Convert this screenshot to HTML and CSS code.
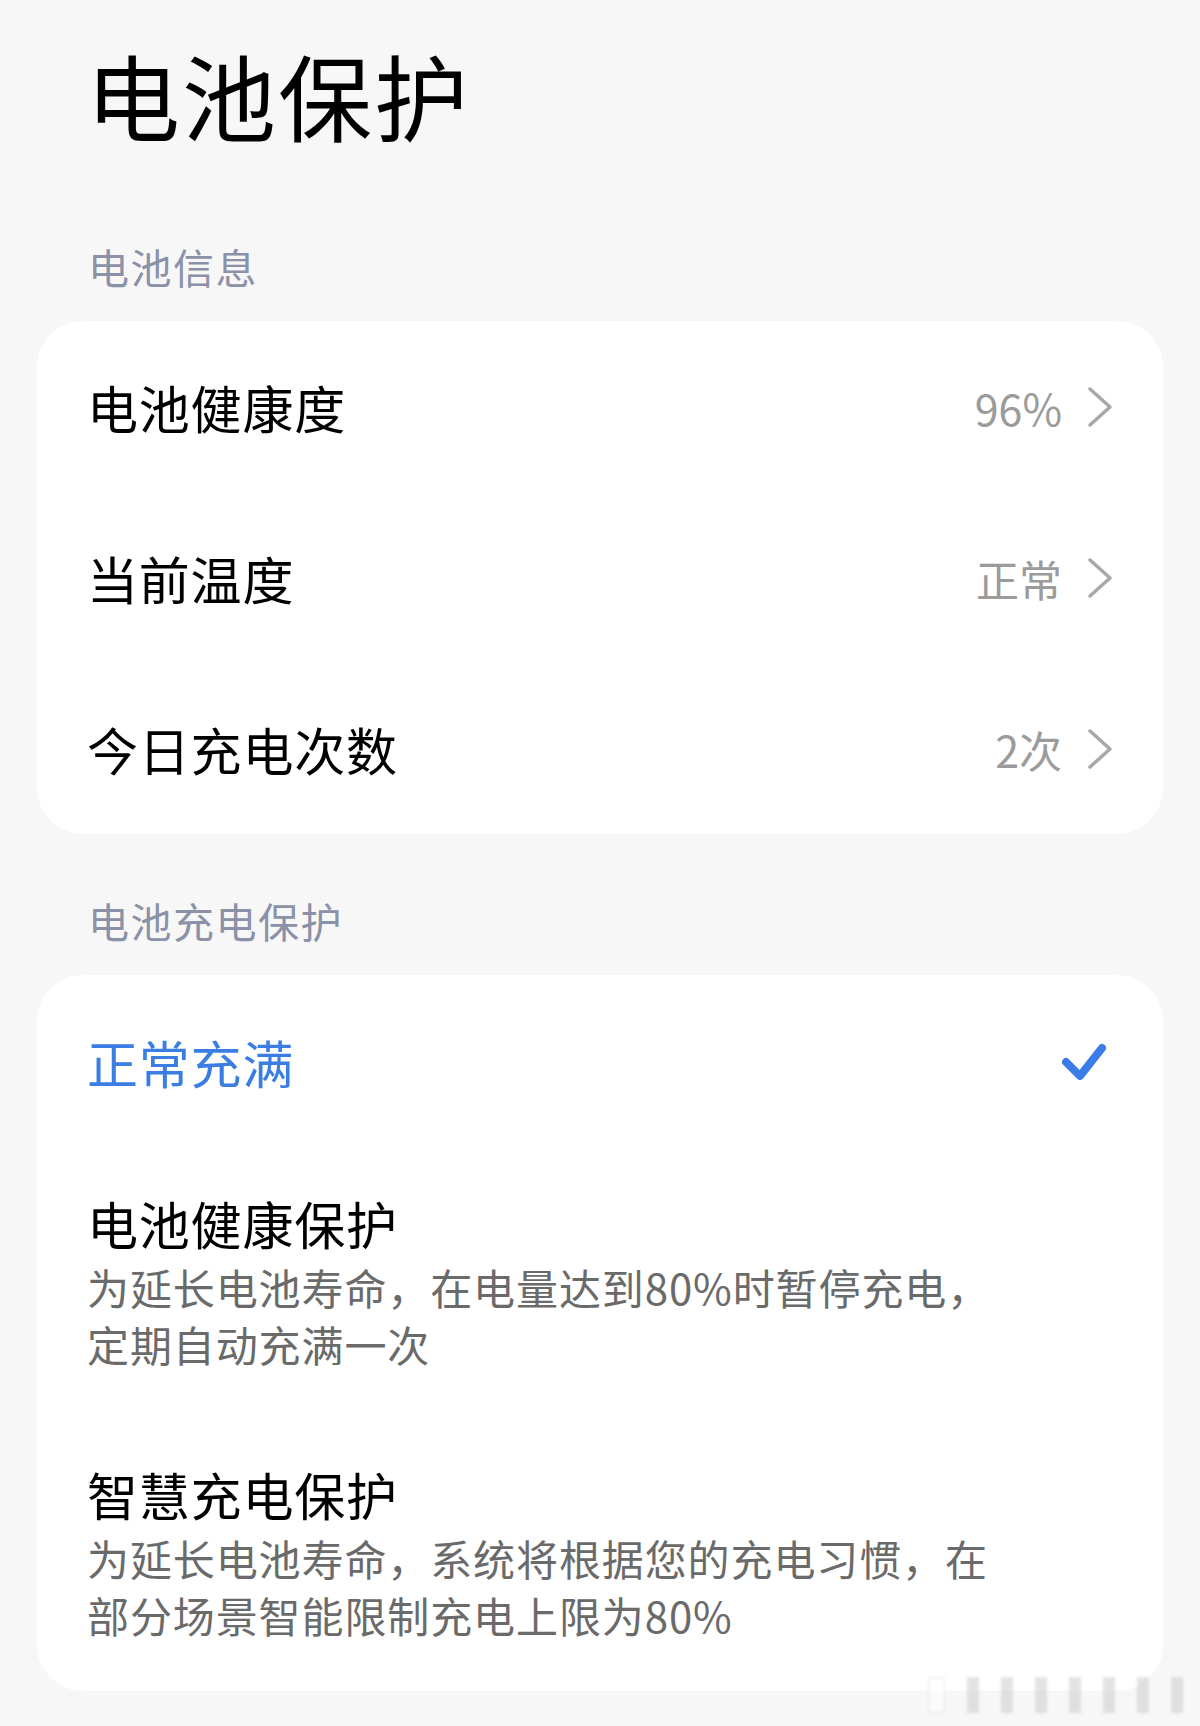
FILE: index.html
```html
<!DOCTYPE html>
<html>
<head>
	<meta charset="utf-8">
	<title>电池保护</title>
	<meta name="viewport" content="width=device-width, initial-scale=1.0" />
	<link rel="stylesheet" href="styles.css">
</head>
<body>
	<div class="page">
		<h1 class="title">电池保护</h1>

		<div class="group-label first">电池信息</div>
		<div class="card">
			<div class="info-row">
				<span class="row-title">电池健康度</span>
				<span class="row-value">96%</span>
				<svg class="chevron" width="28" height="44" viewBox="0 0 28 44"><polyline points="4,4 24,22 4,40" /></svg>
			</div>
			<div class="info-row">
				<span class="row-title">当前温度</span>
				<span class="row-value">正常</span>
				<svg class="chevron" width="28" height="44" viewBox="0 0 28 44"><polyline points="4,4 24,22 4,40" /></svg>
			</div>
			<div class="info-row">
				<span class="row-title">今日充电次数</span>
				<span class="row-value">2次</span>
				<svg class="chevron" width="28" height="44" viewBox="0 0 28 44"><polyline points="4,4 24,22 4,40" /></svg>
			</div>
		</div>

		<div class="group-label">电池充电保护</div>
		<div class="card">
			<div class="choice-row">
				<span class="row-title selected">正常充满</span>
				<svg class="check" width="48" height="44" viewBox="0 0 48 44"><polyline points="8,22 22,36 44,8" /></svg>
			</div>
			<div class="option">
				<div class="row-title">电池健康保护</div>
				<div class="row-desc">为延长电池寿命，在电量达到80%时暂停充电，<br>定期自动充满一次</div>
			</div>
			<div class="option">
				<div class="row-title">智慧充电保护</div>
				<div class="row-desc">为延长电池寿命，系统将根据您的充电习惯，在<br>部分场景智能限制充电上限为80%</div>
			</div>
		</div>

		<div class="watermark">
			<span class="wm-pill"></span>
			<span class="wm-bar"></span>
			<span class="wm-bar"></span>
			<span class="wm-bar"></span>
			<span class="wm-bar"></span>
			<span class="wm-bar"></span>
			<span class="wm-bar"></span>
			<span class="wm-bar"></span>
		</div>
	</div>
</body>
</html>
```

FILE: styles.css
```css
html, body {
	margin: 0;
	background: #f7f7f7;
	font-family: "Noto Sans CJK SC", "Noto Sans", sans-serif;
}
.page {
	position: relative;
	height: 1726px;
	padding: 0 37px;
	box-sizing: border-box;
	overflow: hidden;
}
.title {
	margin: 0;
	padding: 47px 0 0 49px;
	font-size: 94px;
	line-height: 94px;
	font-weight: 400;
	letter-spacing: 2px;
	color: #000;
}
.group-label {
	margin: 66px 0 34px 0;
	padding-left: 51px;
	font-size: 41px;
	line-height: 41px;
	letter-spacing: 1.5px;
	color: #8b91a7;
}
.group-label.first {
	margin-top: 105px;
}
.card {
	background: #fff;
	border-radius: 46px;
}
.info-row {
	display: flex;
	align-items: center;
	height: 171px;
	padding: 0 49px 0 50px;
}
.row-title {
	flex: 1;
	font-size: 51px;
	line-height: 64px;
	letter-spacing: 0.8px;
	color: #000;
}
.row-title.selected {
	color: #3a7de3;
}
.row-value {
	margin-right: 24px;
	font-size: 43px;
	color: #9b9b9b;
}
.chevron polyline {
	fill: none;
	stroke: #a8a8a8;
	stroke-width: 3.5;
	stroke-linecap: round;
	stroke-linejoin: round;
}
.choice-row {
	display: flex;
	align-items: center;
	height: 174px;
	padding: 0 57px 0 50px;
}
.check polyline {
	fill: none;
	stroke: #3a7de8;
	stroke-width: 8;
	stroke-linecap: round;
	stroke-linejoin: round;
}
.option {
	padding: 42px 50px 48px 50px;
}
.row-desc {
	margin-top: 3px;
	font-size: 42px;
	line-height: 57px;
	letter-spacing: 0.9px;
	color: #6a6a6a;
	white-space: nowrap;
}
.watermark {
	position: absolute;
	left: 928px;
	top: 1677px;
	display: flex;
	align-items: stretch;
	gap: 22px;
	height: 36px;
	filter: blur(1.5px);
	opacity: 0.5;
}
.wm-pill {
	width: 15px;
	background: #fff;
	border: 1px solid #d0d0d0;
	border-radius: 3px;
}
.wm-bar {
	width: 12px;
	background: #c8c8c8;
}
```
